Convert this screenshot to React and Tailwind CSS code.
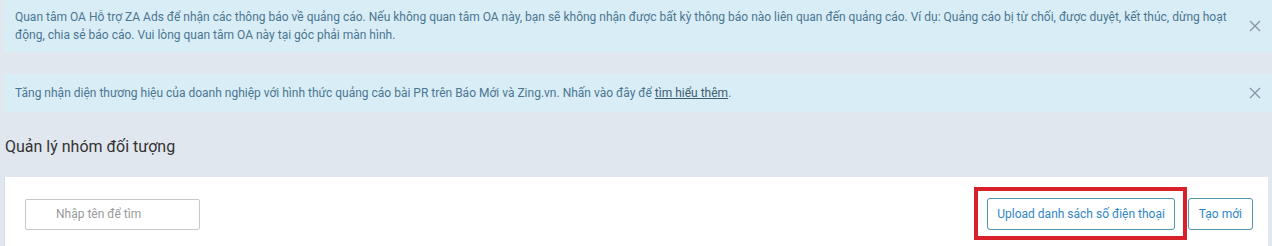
import React from 'react';

// Small close "x" used by the dismissible notices
const CloseIcon = () => (
  <svg width="12" height="12" viewBox="0 0 12 12" className="shrink-0">
    <path d="M1 1 L11 11 M11 1 L1 11" stroke="#8797a6" strokeWidth="1.4" fill="none" />
  </svg>
);

const Notice = ({ children, className = '' }) => (
  <div className={`flex items-center bg-[#d9edf7] pl-[11px] pr-[9px] ${className}`}>
    <div className="flex-1 text-[12px] leading-[18px] text-[#4b7690]">{children}</div>
    <button className="ml-[6px] p-[2px]">
      <CloseIcon />
    </button>
  </div>
);

const App = () => {
  return (
    <div
      className="min-h-[246px] bg-[#e1e7ef] pl-[4px] overflow-hidden"
      style={{ fontFamily: 'Roboto, "Noto Sans", sans-serif' }}
    >
      {/* Notices */}
      <Notice className="py-[8px]">
        Quan tâm OA Hỗ trợ ZA Ads để nhận các thông báo về quảng cáo. Nếu không quan tâm OA này, bạn sẽ không nhận được bất kỳ thông báo nào liên quan đến quảng cáo. Ví dụ: Quảng cáo bị từ chối, được duyệt, kết thúc, dừng hoạt động, chia sẻ báo cáo. Vui lòng quan tâm OA này tại góc phải màn hình.
      </Notice>

      <Notice className="mt-[22px] py-[10px]">
        Tăng nhận diện thương hiệu của doanh nghiệp với hình thức quảng cáo bài PR trên Báo Mới và Zing.vn. Nhấn vào đây để{' '}
        <a className="underline text-[#3d5d72]">tìm hiểu thêm</a>.
      </Notice>

      {/* Section title */}
      <h2 className="mt-[25px] ml-[1px] text-[16px] leading-[20px] text-[#333]">Quản lý nhóm đối tượng</h2>

      {/* Card */}
      <div className="mt-[20px] mr-[4px] bg-white border-l border-[#d3dde6] pl-[20px] pr-[15px] pt-[21px] pb-[20px] flex items-center">
        <input
          type="text"
          placeholder="Nhập tên để tìm"
          className="w-[175px] h-[31px] border border-[#c8c8c8] rounded-[2px] pl-[30px] text-[12px] text-[#333] placeholder:text-[#9a9a9a] outline-none"
        />
        <div className="flex-1" />
        <div className="flex items-center gap-[13px]">
          <div className="relative">
            <button className="h-[32px] px-[9px] border border-[#4e95ad] rounded-[3px] text-[12px] text-[#2f86c4] bg-white">
              Upload danh sách số điện thoại
            </button>
            {/* highlight annotation */}
            <span className="absolute left-[-13px] right-[-12px] top-[-11px] bottom-[-10px] border-[4px] border-[#d8202a] pointer-events-none" />
          </div>
          <button className="h-[32px] px-[10px] border border-[#4e95ad] rounded-[3px] text-[12px] text-[#2f86c4] bg-white">
            Tạo mới
          </button>
        </div>
      </div>
    </div>
  );
};

export default App;
